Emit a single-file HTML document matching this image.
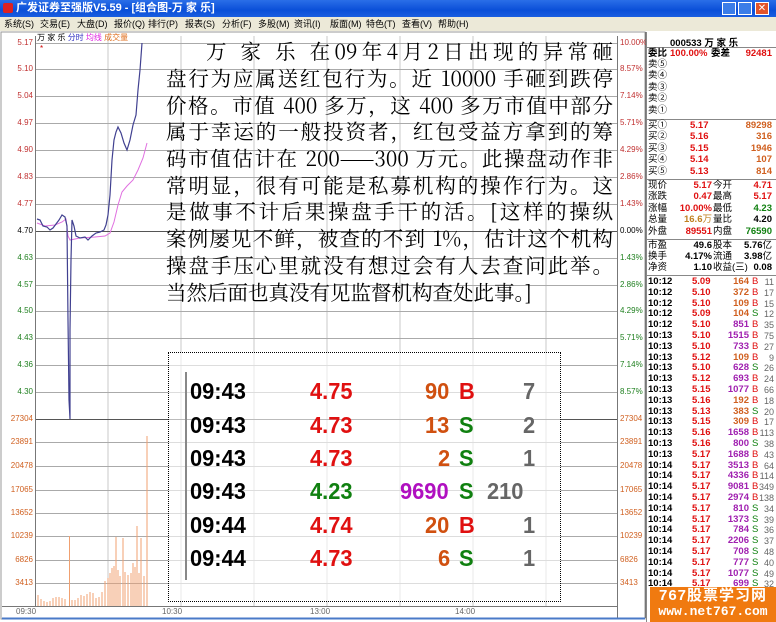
<!DOCTYPE html>
<html><head><meta charset="utf-8"><style>
*{margin:0;padding:0;box-sizing:border-box}
body{width:776px;height:622px;overflow:hidden;background:#fff;position:relative;font-family:"Liberation Sans","Noto Sans CJK SC",sans-serif}
.a{position:absolute;white-space:nowrap}
#title{left:0;top:0;width:776px;height:17px;background:linear-gradient(#2a6ee8,#0a4fd8 60%,#1a5ee0);color:#fff;font-size:11px;line-height:17px;padding-left:16px;font-weight:bold}
#menu{left:0;top:17px;width:776px;height:14px;background:#ece9d8;font-size:9px;line-height:14px;color:#000}
#menu span{position:absolute;top:0}
.ylab{font-size:8px;width:33px;text-align:right;left:0}
.rlab{font-size:8px;left:620px}
.rp{font-size:9.5px;font-weight:bold;line-height:11px}
.txt{left:166px;width:447px;font-family:"Noto Serif CJK SC","Liberation Serif",serif;font-size:20.5px;line-height:26.8px;color:#000;text-align:justify;text-align-last:justify;white-space:nowrap}
.big{font-size:23px;font-weight:bold;font-family:"Liberation Sans",sans-serif;transform:scaleX(0.95);transform-origin:left}
</style></head><body>
<div id="title" class="a">广发证券至强版V5.59 - [组合图-万 家 乐]</div>
<div class="a" style="left:3px;top:3px;width:10px;height:10px;background:#d22;border-radius:2px"></div>
<div class="a" style="left:722px;top:2px;width:14px;height:13px;background:#3b7de8;border:1px solid #fff"></div>
<div class="a" style="left:738px;top:2px;width:14px;height:13px;background:#3b7de8;border:1px solid #fff"></div>
<div class="a" style="left:755px;top:2px;width:14px;height:13px;background:#e2542a;border:1px solid #fff;color:#fff;font-size:10px;line-height:11px;text-align:center">✕</div>
<div id="menu" class="a"><span style="left:4px">系统(S)</span><span style="left:40px">交易(E)</span><span style="left:77px">大盘(D)</span><span style="left:114px">报价(Q)</span><span style="left:148px">排行(P)</span><span style="left:185px">报表(S)</span><span style="left:222px">分析(F)</span><span style="left:258px">多股(M)</span><span style="left:294px">资讯(I)</span><span style="left:330px">版面(M)</span><span style="left:366px">特色(T)</span><span style="left:402px">查看(V)</span><span style="left:438px">帮助(H)</span></div>

<svg class="a" style="left:0;top:31px" width="646" height="591" viewBox="0 31 646 591">
<rect x="1" y="32" width="644" height="587" fill="#fff" stroke="#999"/>
<g stroke="#c8c8c8" stroke-width="1">
<line x1="108" y1="36" x2="108" y2="606"/><line x1="181" y1="36" x2="181" y2="606"/><line x1="254" y1="36" x2="254" y2="606"/><line x1="327" y1="36" x2="327" y2="606"/><line x1="400" y1="36" x2="400" y2="606"/><line x1="473" y1="36" x2="473" y2="606"/><line x1="546" y1="36" x2="546" y2="606"/>
</g>
<g stroke="#aaa" stroke-width="1">
<line x1="35" y1="43.5" x2="617" y2="43.5"/><line x1="35" y1="69.5" x2="617" y2="69.5"/><line x1="35" y1="96.5" x2="617" y2="96.5"/><line x1="35" y1="123.5" x2="617" y2="123.5"/><line x1="35" y1="150.5" x2="617" y2="150.5"/><line x1="35" y1="177.5" x2="617" y2="177.5"/><line x1="35" y1="204.5" x2="617" y2="204.5"/><line x1="35" y1="258.5" x2="617" y2="258.5"/><line x1="35" y1="285.5" x2="617" y2="285.5"/><line x1="35" y1="311.5" x2="617" y2="311.5"/><line x1="35" y1="338.5" x2="617" y2="338.5"/><line x1="35" y1="365.5" x2="617" y2="365.5"/><line x1="35" y1="392.5" x2="617" y2="392.5"/>
<line x1="35" y1="442.5" x2="617" y2="442.5"/><line x1="35" y1="466.5" x2="617" y2="466.5"/><line x1="35" y1="490.5" x2="617" y2="490.5"/><line x1="35" y1="513.5" x2="617" y2="513.5"/><line x1="35" y1="536.5" x2="617" y2="536.5"/><line x1="35" y1="560.5" x2="617" y2="560.5"/><line x1="35" y1="583.5" x2="617" y2="583.5"/>
</g>
<line x1="35" y1="231.5" x2="617" y2="231.5" stroke="#555"/>
<line x1="35" y1="419.5" x2="617" y2="419.5" stroke="#555"/>
<line x1="35.5" y1="36" x2="35.5" y2="606" stroke="#777"/>
<line x1="617.5" y1="36" x2="617.5" y2="618" stroke="#777"/>
<line x1="645.5" y1="32" x2="645.5" y2="618" stroke="#777"/>
<line x1="2" y1="606.5" x2="617" y2="606.5" stroke="#777"/>
<line x1="2" y1="618.5" x2="645" y2="618.5" stroke="#4a7ac8" stroke-width="2"/>
<g stroke="#f0a070" stroke-width="1">
<path d="M38 606V595M41 606V599M44 606V601M47 606V602M50 606V601M53 606V598M56 606V597M59 606V597M62 606V598M65 606V599M69.5 606V536M72 606V600M75 606V600M78 606V598M81 606V595M84 606V596M87 606V594M90 606V592M93 606V593M96 606V598M99 606V597M102 606V592M105 606V581M108 606V578M110 606V573M112 606V568M114 606V566M116 606V537M118 606V570M120 606V576M123 606V538M125 606V572M128 606V575M131 606V573M133 606V563M135 606V567M137 606V526M139 606V573M141 606V538M144 606V576M147 606V436"/>
</g>
<polyline fill="none" stroke="#e070e0" stroke-width="1" points="37,223 45,226 55,225 62,222 66,219 68,236 70,240 80,238 95,237 105,236 110,233 114,222 118,205 122,192 127,186 133,180 138,170 143,158 147,143"/>
<polyline fill="none" stroke="#404090" stroke-width="1.2" points="37,219 40,220 43,226 47,227 50,230 53,228 56,224 59,220 62,215 65,217 67,226 68,320 69,400 70,419 70,330 71,260 72,220 74,226 76,236 80,238 85,237 88,240 92,236 96,233 100,232 104,230 106,225 108,215 110,195 112,160 114,140 116,132 118,127 121,133 124,143 127,150 130,140 133,125 136,115 138,90 140,70 142,43"/>
<text x="40" y="51" font-size="8" fill="#c00">*</text>
</svg>

<div class="a" style="left:37px;top:32px;font-size:8px"><span>万 家 乐</span> <span style="color:#3030c0">分时</span> <span style="color:#e020e0">均线</span> <span style="color:#e07020">成交量</span></div>
<div class="a ylab" style="top:38px;color:#c03030">5.17</div>
<div class="a ylab" style="top:64px;color:#c03030">5.10</div>
<div class="a ylab" style="top:91px;color:#c03030">5.04</div>
<div class="a ylab" style="top:118px;color:#c03030">4.97</div>
<div class="a ylab" style="top:145px;color:#c03030">4.90</div>
<div class="a ylab" style="top:172px;color:#c03030">4.83</div>
<div class="a ylab" style="top:199px;color:#c03030">4.77</div>
<div class="a ylab" style="top:226px;color:#000">4.70</div>
<div class="a ylab" style="top:253px;color:#208020">4.63</div>
<div class="a ylab" style="top:280px;color:#208020">4.57</div>
<div class="a ylab" style="top:306px;color:#208020">4.50</div>
<div class="a ylab" style="top:333px;color:#208020">4.43</div>
<div class="a ylab" style="top:360px;color:#208020">4.36</div>
<div class="a ylab" style="top:387px;color:#208020">4.30</div>
<div class="a ylab" style="top:414px;color:#d06020">27304</div>
<div class="a ylab" style="top:437px;color:#d06020">23891</div>
<div class="a ylab" style="top:461px;color:#d06020">20478</div>
<div class="a ylab" style="top:485px;color:#d06020">17065</div>
<div class="a ylab" style="top:508px;color:#d06020">13652</div>
<div class="a ylab" style="top:531px;color:#d06020">10239</div>
<div class="a ylab" style="top:555px;color:#d06020">6826</div>
<div class="a ylab" style="top:578px;color:#d06020">3413</div>
<div class="a rlab" style="top:38px;color:#c03030">10.00%</div>
<div class="a rlab" style="top:64px;color:#c03030">8.57%</div>
<div class="a rlab" style="top:91px;color:#c03030">7.14%</div>
<div class="a rlab" style="top:118px;color:#c03030">5.71%</div>
<div class="a rlab" style="top:145px;color:#c03030">4.29%</div>
<div class="a rlab" style="top:172px;color:#c03030">2.86%</div>
<div class="a rlab" style="top:199px;color:#c03030">1.43%</div>
<div class="a rlab" style="top:226px;color:#000">0.00%</div>
<div class="a rlab" style="top:253px;color:#208020">1.43%</div>
<div class="a rlab" style="top:280px;color:#208020">2.86%</div>
<div class="a rlab" style="top:306px;color:#208020">4.29%</div>
<div class="a rlab" style="top:333px;color:#208020">5.71%</div>
<div class="a rlab" style="top:360px;color:#208020">7.14%</div>
<div class="a rlab" style="top:387px;color:#208020">8.57%</div>
<div class="a rlab" style="top:414px;color:#d06020">27304</div>
<div class="a rlab" style="top:437px;color:#d06020">23891</div>
<div class="a rlab" style="top:461px;color:#d06020">20478</div>
<div class="a rlab" style="top:485px;color:#d06020">17065</div>
<div class="a rlab" style="top:508px;color:#d06020">13652</div>
<div class="a rlab" style="top:531px;color:#d06020">10239</div>
<div class="a rlab" style="top:555px;color:#d06020">6826</div>
<div class="a rlab" style="top:578px;color:#d06020">3413</div>
<div class="a" style="left:16px;top:607px;font-size:8px;color:#666">09:30</div>
<div class="a" style="left:162px;top:607px;font-size:8px;color:#666">10:30</div>
<div class="a" style="left:310px;top:607px;font-size:8px;color:#666">13:00</div>
<div class="a" style="left:455px;top:607px;font-size:8px;color:#666">14:00</div>

<div class="a txt" style="top:37px;padding-left:40px">万 家 乐 在09年4月2日出现的异常砸</div>
<div class="a txt" style="top:64px">盘行为应属送红包行为。近 10000 手砸到跌停</div>
<div class="a txt" style="top:91px">价格。市值 400 多万，这 400 多万市值中部分</div>
<div class="a txt" style="top:117px">属于幸运的一般投资者，红包受益方拿到的筹</div>
<div class="a txt" style="top:144px">码市值估计在 200——300 万元。此操盘动作非</div>
<div class="a txt" style="top:171px">常明显，很有可能是私募机构的操作行为。这</div>
<div class="a txt" style="top:197px">是做事不计后果操盘手干的活。[这样的操纵</div>
<div class="a txt" style="top:224px">案例屡见不鲜，被查的不到 1%，估计这个机构</div>
<div class="a txt" style="top:251px">操盘手压心里就没有想过会有人去查问此举。</div>
<div class="a txt" style="top:278px;text-align-last:left">当然后面也真没有见监督机构查处此事。]</div>

<div class="a" style="left:168px;top:352px;width:393px;height:250px;border:1px dotted #000;background:rgba(255,255,255,0.6)"></div>
<div class="a" style="left:185px;top:372px;width:2px;height:208px;background:#888"></div>
<div class="a" style="left:190px;top:378px;width:360px;height:200px">
<div style="position:relative">
<div class="a big" style="top:0;left:0">09:43</div><div class="a big" style="top:0;left:120px;color:#e01010">4.75</div><div class="a big" style="top:0;left:235px;color:#d05010">90</div><div class="a big" style="top:0;left:269px;color:#e01010">B</div><div class="a big" style="top:0;left:333px;color:#666">7</div>
<div class="a big" style="top:34px;left:0">09:43</div><div class="a big" style="top:34px;left:120px;color:#e01010">4.73</div><div class="a big" style="top:34px;left:235px;color:#d05010">13</div><div class="a big" style="top:34px;left:269px;color:#108010">S</div><div class="a big" style="top:34px;left:333px;color:#666">2</div>
<div class="a big" style="top:67px;left:0">09:43</div><div class="a big" style="top:67px;left:120px;color:#e01010">4.73</div><div class="a big" style="top:67px;left:248px;color:#d05010">2</div><div class="a big" style="top:67px;left:269px;color:#108010">S</div><div class="a big" style="top:67px;left:333px;color:#666">1</div>
<div class="a big" style="top:100px;left:0">09:43</div><div class="a big" style="top:100px;left:120px;color:#108010">4.23</div><div class="a big" style="top:100px;left:210px;color:#b010c0">9690</div><div class="a big" style="top:100px;left:269px;color:#108010">S</div><div class="a big" style="top:100px;left:297px;color:#666">210</div>
<div class="a big" style="top:134px;left:0">09:44</div><div class="a big" style="top:134px;left:120px;color:#e01010">4.74</div><div class="a big" style="top:134px;left:235px;color:#d05010">20</div><div class="a big" style="top:134px;left:269px;color:#e01010">B</div><div class="a big" style="top:134px;left:333px;color:#666">1</div>
<div class="a big" style="top:167px;left:0">09:44</div><div class="a big" style="top:167px;left:120px;color:#e01010">4.73</div><div class="a big" style="top:167px;left:248px;color:#d05010">6</div><div class="a big" style="top:167px;left:269px;color:#108010">S</div><div class="a big" style="top:167px;left:333px;color:#666">1</div>
</div></div>

<!-- right panel -->
<div class="a" style="left:646px;top:32px;width:130px;height:590px;background:#fff;border-left:1px solid #888"></div>
<div class="a" style="left:670px;top:35px;font-size:9.5px;font-weight:bold">000533 万 家 乐</div>
<svg class="a" style="left:646px;top:32px" width="130" height="560"><g stroke="#888"><line x1="0" y1="15.5" x2="130" y2="15.5"/><line x1="0" y1="87.5" x2="130" y2="87.5"/><line x1="0" y1="147.5" x2="130" y2="147.5"/><line x1="0" y1="207.5" x2="130" y2="207.5"/><line x1="0" y1="243.5" x2="130" y2="243.5"/></g></svg>
<div class="a rp" style="left:648px;top:48px;width:124px">委比<span style="position:absolute;left:22px;color:#e01010">100.00%</span><span style="position:absolute;left:63px">委差</span><span style="position:absolute;right:0;color:#e01010">92481</span></div>
<div class="a rp" style="left:648px;top:59px;font-weight:normal;line-height:11.4px">卖⑤<br>卖④<br>卖③<br>卖②<br>卖①</div>
<div class="a rp" style="left:648px;top:120px;width:124px;font-weight:normal;line-height:11.4px">买①<br>买②<br>买③<br>买④<br>买⑤</div>
<div class="a rp" style="left:690px;top:120px;color:#e01010;line-height:11.4px">5.17<br>5.16<br>5.15<br>5.14<br>5.13</div>
<div class="a rp" style="left:720px;top:120px;width:52px;text-align:right;color:#d06020;line-height:11.4px">89298<br>316<br>1946<br>107<br>814</div>
<div class="a rp" style="left:648px;top:180px;font-weight:normal;line-height:11.4px">现价<br>涨跌<br>涨幅<br>总量<br>外盘</div>
<div class="a rp" style="left:670px;top:180px;width:42px;text-align:right;line-height:11.4px"><span style="color:#e01010">5.17</span><br><span style="color:#e01010">0.47</span><br><span style="color:#e01010">10.00%</span><br><span style="color:#c08020">16.6<span style="font-weight:normal">万</span></span><br><span style="color:#e01010">89551</span></div>
<div class="a rp" style="left:713px;top:180px;font-weight:normal;line-height:11.4px">今开<br>最高<br>最低<br>量比<br>内盘</div>
<div class="a rp" style="left:735px;top:180px;width:37px;text-align:right;line-height:11.4px"><span style="color:#e01010">4.71</span><br><span style="color:#e01010">5.17</span><br><span style="color:#108010">4.23</span><br>4.20<br><span style="color:#108010">76590</span></div>
<div class="a rp" style="left:648px;top:240px;font-weight:normal;line-height:11px">市盈<br>换手<br>净资</div>
<div class="a rp" style="left:670px;top:240px;width:42px;text-align:right;line-height:11px">49.6<br>4.17%<br>1.10</div>
<div class="a rp" style="left:713px;top:240px;font-weight:normal;line-height:11px">股本<br>流通<br>收益(三)</div>
<div class="a rp" style="left:735px;top:240px;width:37px;text-align:right;line-height:11px">5.76<span style="font-weight:normal">亿</span><br>3.98<span style="font-weight:normal">亿</span><br>0.08</div>
<div class="a rp" style="left:648px;top:277px;line-height:10.8px">10:12<br>10:12<br>10:12<br>10:12<br>10:12<br>10:13<br>10:13<br>10:13<br>10:13<br>10:13<br>10:13<br>10:13<br>10:13<br>10:13<br>10:13<br>10:13<br>10:13<br>10:14<br>10:14<br>10:14<br>10:14<br>10:14<br>10:14<br>10:14<br>10:14<br>10:14<br>10:14<br>10:14<br>10:14</div>
<div class="a rp" style="left:692px;top:277px;color:#e01010;line-height:10.8px">5.09<br>5.10<br>5.10<br>5.09<br>5.10<br>5.10<br>5.10<br>5.12<br>5.10<br>5.12<br>5.15<br>5.16<br>5.13<br>5.15<br>5.16<br>5.16<br>5.17<br>5.17<br>5.17<br>5.17<br>5.17<br>5.17<br>5.17<br>5.17<br>5.17<br>5.17<br>5.17<br>5.17<br>5.17</div>
<div class="a rp" style="left:713px;top:277px;width:36px;text-align:right;line-height:10.8px"><span style="color:#d06020">164</span><br><span style="color:#d06020">372</span><br><span style="color:#d06020">109</span><br><span style="color:#d06020">104</span><br><span style="color:#a020b0">851</span><br><span style="color:#a020b0">1515</span><br><span style="color:#a020b0">733</span><br><span style="color:#d06020">109</span><br><span style="color:#a020b0">628</span><br><span style="color:#a020b0">693</span><br><span style="color:#a020b0">1077</span><br><span style="color:#d06020">192</span><br><span style="color:#d06020">383</span><br><span style="color:#d06020">309</span><br><span style="color:#a020b0">1658</span><br><span style="color:#a020b0">800</span><br><span style="color:#a020b0">1688</span><br><span style="color:#a020b0">3513</span><br><span style="color:#a020b0">4336</span><br><span style="color:#a020b0">9081</span><br><span style="color:#a020b0">2974</span><br><span style="color:#a020b0">810</span><br><span style="color:#a020b0">1373</span><br><span style="color:#a020b0">784</span><br><span style="color:#a020b0">2206</span><br><span style="color:#a020b0">708</span><br><span style="color:#a020b0">777</span><br><span style="color:#a020b0">1077</span><br><span style="color:#a020b0">699</span></div>
<div class="a rp" style="left:752px;top:277px;font-weight:normal;line-height:10.8px"><span style="color:#e01010">B</span><br><span style="color:#e01010">B</span><br><span style="color:#e01010">B</span><br><span style="color:#108010">S</span><br><span style="color:#e01010">B</span><br><span style="color:#e01010">B</span><br><span style="color:#e01010">B</span><br><span style="color:#e01010">B</span><br><span style="color:#108010">S</span><br><span style="color:#e01010">B</span><br><span style="color:#e01010">B</span><br><span style="color:#e01010">B</span><br><span style="color:#108010">S</span><br><span style="color:#e01010">B</span><br><span style="color:#e01010">B</span><br><span style="color:#108010">S</span><br><span style="color:#e01010">B</span><br><span style="color:#e01010">B</span><br><span style="color:#e01010">B</span><br><span style="color:#e01010">B</span><br><span style="color:#e01010">B</span><br><span style="color:#108010">S</span><br><span style="color:#108010">S</span><br><span style="color:#108010">S</span><br><span style="color:#108010">S</span><br><span style="color:#108010">S</span><br><span style="color:#108010">S</span><br><span style="color:#108010">S</span><br><span style="color:#108010">S</span></div>
<div class="a rp" style="left:758px;top:277px;width:16px;text-align:right;font-weight:normal;color:#666;line-height:10.8px;font-size:9px">11<br>17<br>15<br>12<br>35<br>75<br>27<br>9<br>26<br>24<br>66<br>18<br>20<br>17<br>113<br>38<br>43<br>64<br>114<br>349<br>138<br>34<br>39<br>36<br>37<br>48<br>40<br>49<br>32</div>

<div class="a" style="left:650px;top:587px;width:126px;height:35px;background:#f07a10;color:#fff;font-weight:bold;text-align:center">
<div style="font-size:15px;line-height:17px;font-family:'Liberation Sans','Noto Sans CJK SC',sans-serif;letter-spacing:1px">767股票学习网</div>
<div style="font-size:13px;line-height:16px;font-family:'Liberation Mono',monospace">www.net767.com</div></div>
</body></html>
